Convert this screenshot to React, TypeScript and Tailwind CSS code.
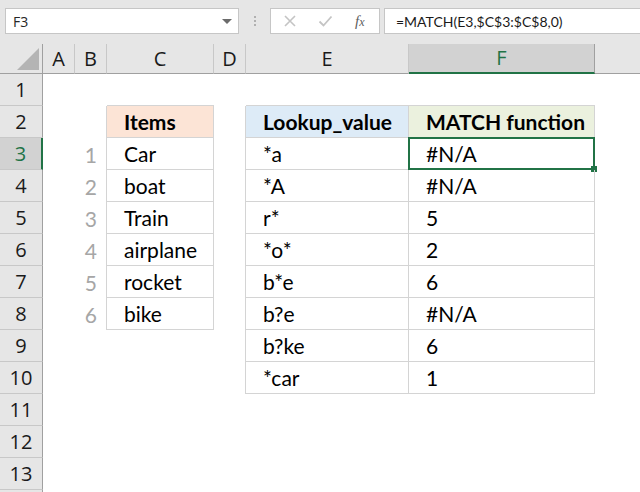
import React from "react";

const COLS = ["A", "B", "C", "D", "E", "F", "G"];
const ROWS = [1, 2, 3, 4, 5, 6, 7, 8, 9, 10, 11, 12, 13, 14];

const items = ["Car", "boat", "Train", "airplane", "rocket", "bike"];
const lookups: [string, string][] = [
  ["*a", "#N/A"],
  ["*A", "#N/A"],
  ["r*", "5"],
  ["*o*", "2"],
  ["b*e", "6"],
  ["b?e", "#N/A"],
  ["b?ke", "6"],
  ["*car", "1"],
];

const inTable = (r: number, c: number) =>
  (c === 2 && r >= 2 && r <= 8) || ((c === 4 || c === 5) && r >= 2 && r <= 10);

function cellContent(r: number, c: number) {
  if (r === 2 && c === 2) return { text: "Items", bold: true, bg: "bg-[#fce4d6]" };
  if (r === 2 && c === 4) return { text: "Lookup_value", bold: true, bg: "bg-[#ddebf7]" };
  if (r === 2 && c === 5) return { text: "MATCH function", bold: true, bg: "bg-[#ebf1de]" };
  if (c === 1 && r >= 3 && r <= 8) return { text: String(r - 2), num: true };
  if (c === 2 && r >= 3 && r <= 8) return { text: items[r - 3] };
  if (c === 4 && r >= 3 && r <= 10) return { text: lookups[r - 3][0] };
  if (c === 5 && r >= 3 && r <= 10) return { text: lookups[r - 3][1] };
  return null;
}

function Toolbar() {
  return (
    <div className="flex h-[44px] items-start bg-[#e6e6e6] pt-[8px]">
      <div className="ml-[5px] flex h-[26px] w-[234px] items-center justify-between border border-[#c6c6c6] bg-white pl-[7px] pr-[6px] font-['Open_Sans',sans-serif] text-[14px] text-[#262626]">
        <span>F3</span>
        <span className="h-0 w-0 border-x-[5px] border-t-[5px] border-x-transparent border-t-[#6b6b6b]" />
      </div>
      <div className="flex h-[26px] w-[31px] flex-col items-center justify-center gap-[2px]">
        <span className="h-[2px] w-[2px] bg-[#b0b0b0]" />
        <span className="h-[2px] w-[2px] bg-[#b0b0b0]" />
        <span className="h-[2px] w-[2px] bg-[#b0b0b0]" />
      </div>
      <div className="flex h-[26px] w-[110px] items-center border border-[#c6c6c6] bg-white">
        <svg width="14" height="14" viewBox="0 0 14 14" className="ml-[12px]">
          <path d="M2 2L12 12M12 2L2 12" stroke="#c4c4c4" strokeWidth="1.6" />
        </svg>
        <svg width="15" height="14" viewBox="0 0 15 14" className="ml-[21px]">
          <path d="M1.5 7.5L5.5 11.5L13.5 2.5" stroke="#c4c4c4" strokeWidth="1.8" fill="none" />
        </svg>
        <span className="ml-[22px] font-['Liberation_Serif',serif] text-[15px] italic text-[#5e5e5e]">
          f<span className="text-[12px]">x</span>
        </span>
      </div>
      <div className="ml-[4px] flex h-[26px] flex-1 items-center border-y border-l border-[#c6c6c6] bg-white pl-[11px] font-['Lato',sans-serif] text-[14px] text-[#1a1a1a]">
        =MATCH(E3,$C$3:$C$8,0)
      </div>
    </div>
  );
}

export default function App() {
  return (
    <div className="h-[492px] w-[640px] overflow-hidden bg-white">
      <Toolbar />
      <div className="grid w-[702px] grid-cols-[43px_32px_32px_107px_32px_163px_186px_107px] grid-rows-[30px_repeat(14,32px)]">
        <div className="relative border-b border-r border-b-[#a0a0a0] border-r-[#a0a0a0] bg-[#e6e6e6]">
          <svg width="22" height="22" viewBox="0 0 22 22" className="absolute bottom-[3px] right-[3px]">
            <path d="M22 0L22 22L0 22Z" fill="#b4b4b4" />
          </svg>
        </div>
        {COLS.map((c) => {
          const sel = c === "F";
          return (
            <div
              key={c}
              className={
                "flex items-center justify-center border-r font-['Open_Sans',sans-serif] text-[20px] " +
                (sel
                  ? "border-b-2 border-b-[#217346] border-r-[#a0a0a0] bg-[#d2d2d2] text-[#217346]"
                  : "border-b border-b-[#a0a0a0] border-r-[#c8c8c8] bg-[#e6e6e6] text-[#1a1a1a]")
              }
            >
              {c === "G" ? "" : c}
            </div>
          );
        })}
        {ROWS.map((r) => (
          <React.Fragment key={r}>
            <div
              className={
                "flex items-center justify-center border-b border-b-[#c8c8c8] font-['Open_Sans',sans-serif] text-[20px] " +
                (r === 3
                  ? "border-r-2 border-r-[#217346] bg-[#d2d2d2] text-[#217346]"
                  : "border-r border-r-[#a0a0a0] bg-[#e6e6e6] text-[#1a1a1a]")
              }
            >
              {r < 14 ? r : ""}
            </div>
            {COLS.map((_, c) => {
              const right = inTable(r, c) || inTable(r, c + 1);
              const bottom = inTable(r, c) || inTable(r + 1, c);
              const ct = cellContent(r, c);
              const selected = r === 3 && c === 5;
              return (
                <div
                  key={c}
                  className={
                    "relative flex items-end overflow-visible whitespace-nowrap pb-[3px] font-['Lato',sans-serif] text-[21px] leading-[24px] " +
                    (right ? "border-r border-r-[#d4d4d4] " : "") +
                    (bottom ? "border-b border-b-[#d4d4d4] " : "") +
                    (ct?.bg ?? "") +
                    (ct?.num ? " justify-end pr-[9px] text-[#a6a6a6]" : " pl-[17px] text-black") +
                    (ct?.bold ? " font-bold" : "")
                  }
                >
                  {ct?.text}
                  {selected && (
                    <>
                      <div className="absolute -left-[1px] -top-[1px] bottom-[-1px] right-[-1px] border-2 border-[#217346]" />
                      <div className="absolute bottom-[-3px] right-[-3px] h-[6px] w-[6px] bg-[#217346]" />
                    </>
                  )}
                </div>
              );
            })}
          </React.Fragment>
        ))}
      </div>
    </div>
  );
}
